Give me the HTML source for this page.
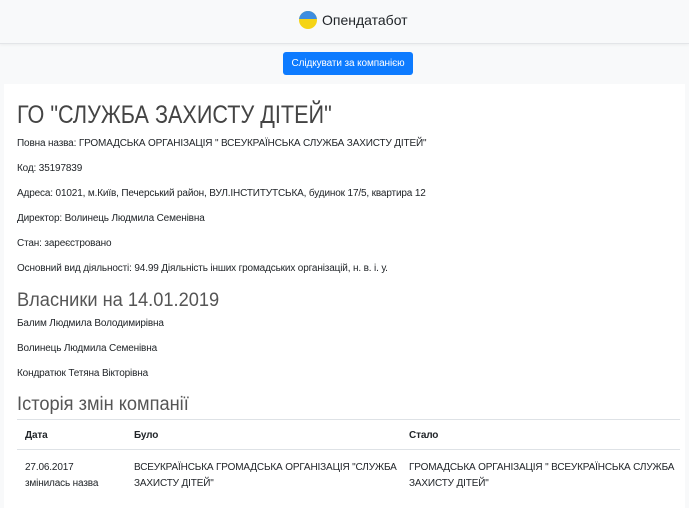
<!DOCTYPE html>
<html><head><meta charset="utf-8"><style>
body{margin:0;background:#f8f9fa;font-family:"Liberation Sans","DejaVu Sans",sans-serif;color:#212529;width:689px;height:508px;overflow:hidden;position:relative}
.hdr{height:43px;border-bottom:1px solid #e3e5e8;box-shadow:0 1px 3px rgba(0,0,0,.05);position:relative}
.logo{position:absolute;left:299px;top:11px;width:18px;height:18px;border-radius:50%;overflow:hidden;background:#f5d415}
.logo:before{content:"";position:absolute;left:0;top:0;width:18px;height:8px;background:#3d8de0}
.brand{position:absolute;left:322px;top:12px;font-size:14px;color:#212529}
.btn{position:absolute;left:283px;top:52px;width:130px;height:23px;background:#0d7bff;border-radius:3px;color:#fff;font-size:10px;text-align:center;line-height:23px;letter-spacing:-0.1px}
.main{position:absolute;left:4px;top:84px;width:681px;height:424px;background:#fff}
.t{position:absolute;left:17px;font-size:10px;letter-spacing:-0.15px;color:#212529;white-space:nowrap}
h1,h2{position:absolute;left:17px;margin:0;font-weight:normal;color:#444;white-space:nowrap;transform-origin:0 0}
h1{font-size:25px;top:101px;transform:scaleX(0.865)}
h2{font-size:19px;top:290px;transform:scaleX(0.96);color:#555}
.hr{position:absolute;left:17px;width:663px;height:1px;background:#dee2e6}
.b{font-weight:bold}
</style></head><body>
<div class="hdr"><div class="logo"></div><div class="brand">Опендатабот</div></div>
<div class="btn">Слідкувати за компанією</div>
<div class="main"></div>
<h1>ГО "СЛУЖБА ЗАХИСТУ ДІТЕЙ"</h1>
<div class="t" style="top:138px">Повна назва: ГРОМАДСЬКА ОРГАНІЗАЦІЯ " ВСЕУКРАЇНСЬКА СЛУЖБА ЗАХИСТУ ДІТЕЙ"</div>
<div class="t" style="top:163px">Код: 35197839</div>
<div class="t" style="top:188px">Адреса: 01021, м.Київ, Печерський район, ВУЛ.ІНСТИТУТСЬКА, будинок 17/5, квартира 12</div>
<div class="t" style="top:213px">Директор: Волинець Людмила Семенівна</div>
<div class="t" style="top:238px">Стан: зареєстровано</div>
<div class="t" style="top:263px">Основний вид діяльності: 94.99 Діяльність інших громадських організацій, н. в. і. у.</div>
<h2>Власники на 14.01.2019</h2>
<div class="t" style="top:318px">Балим Людмила Володимирівна</div>
<div class="t" style="top:343px">Волинець Людмила Семенівна</div>
<div class="t" style="top:368px">Кондратюк Тетяна Вікторівна</div>
<h2 style="top:394px">Історія змін компанії</h2>
<div class="hr" style="top:419px"></div>
<div class="t b" style="top:430px;left:25px">Дата</div>
<div class="t b" style="top:430px;left:134px">Було</div>
<div class="t b" style="top:430px;left:409px">Стало</div>
<div class="hr" style="top:449px"></div>
<div class="t" style="top:460px;left:25px;line-height:16px">27.06.2017<br>змінилась назва</div>
<div class="t" style="top:460px;left:134px;line-height:16px">ВСЕУКРАЇНСЬКА ГРОМАДСЬКА ОРГАНІЗАЦІЯ "СЛУЖБА<br>ЗАХИСТУ ДІТЕЙ"</div>
<div class="t" style="top:460px;left:409px;line-height:16px">ГРОМАДСЬКА ОРГАНІЗАЦІЯ " ВСЕУКРАЇНСЬКА СЛУЖБА<br>ЗАХИСТУ ДІТЕЙ"</div>
</body></html>
